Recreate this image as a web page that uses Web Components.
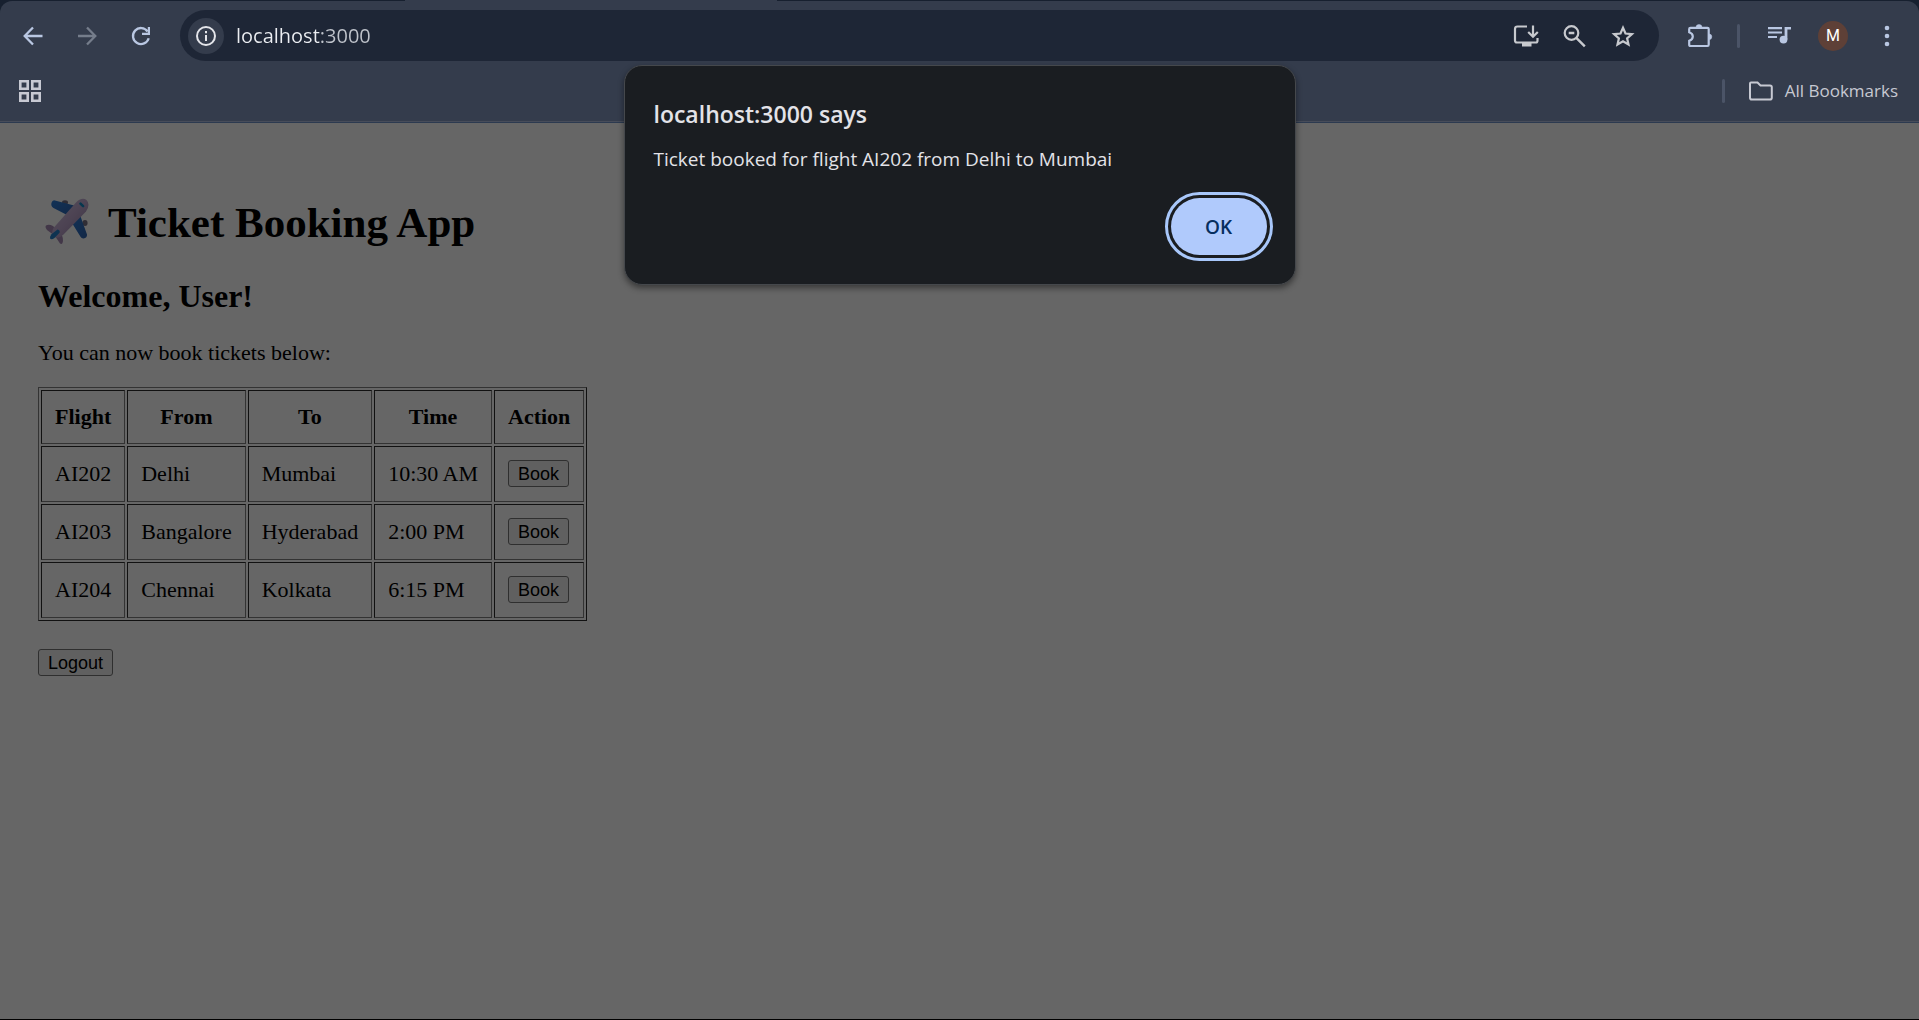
<!DOCTYPE html>
<html lang="en">
<head>
<meta charset="utf-8">
<title>Ticket Booking App</title>
<style>
  html, body { height: 100%; margin: 0; }
  body { background: #000; overflow: hidden; }
</style>
</head>
<body>
<browser-window>
  <browser-toolbar slot="toolbar"></browser-toolbar>
  <bookmarks-bar slot="bookmarks"></bookmarks-bar>
  <booking-page slot="page"></booking-page>
  <alert-dialog slot="dialog" heading="localhost:3000 says">Ticket booked for flight AI202 from Delhi to Mumbai</alert-dialog>
</browser-window>

<script>
const define = (name, html, setup) => {
  const template = document.createElement('template');
  template.innerHTML = html;
  customElements.define(name, class extends HTMLElement {
    constructor() {
      super();
      this.attachShadow({ mode: 'open' }).append(template.content.cloneNode(true));
    }
    connectedCallback() { if (setup) setup(this, this.shadowRoot); }
  });
};

const icons = {
  back: '<path d="M23.500 14H6M14 5.500 5.700 14l8.300 8.500" fill="none" stroke="currentColor" stroke-width="2.300"/>',
  forward: '<path d="M5 14h17.500M14 5.500l8.300 8.500-8.300 8.500" fill="none" stroke="currentColor" stroke-width="2.300"/>',
  reload: '<path d="M21.700 16.200A8 8 0 1 1 20.600 9.500" fill="none" stroke="currentColor" stroke-width="2.300"/><path d="M23 5v8h-8v-2.200h5.800V5z" fill="currentColor"/>',
  info: '<circle cx="14" cy="14" r="9" fill="none" stroke="currentColor" stroke-width="2"/><path d="M14 13v6M14 9v2.200" stroke="currentColor" stroke-width="2"/>',
  install: '<path d="M14 4.500H4.500Q2 4.500 2 7v11.500q0 2 2 2h19q1.500 0 1.500-2v-2.500" fill="none" stroke="currentColor" stroke-width="2.200"/><path d="M9 20.500h9.500v4H9z" fill="currentColor"/><path d="M20 3.500v10.500M15.200 10l4.800 4.800 4.800-4.800" fill="none" stroke="currentColor" stroke-width="2.200"/>',
  zoom: '<circle cx="10.500" cy="11" r="6.800" fill="none" stroke="currentColor" stroke-width="2.200"/><path d="M7.700 11h5.600M15.300 15.900l8.500 8.500" stroke="currentColor" stroke-width="2.400"/>',
  star: '<path d="M14 5.700l2.500 5.800 6.400.6-4.800 4.200 1.400 6.200L14 19.200l-5.500 3.300 1.400-6.200-4.800-4.200 6.400-.6z" fill="none" stroke="currentColor" stroke-width="2.200" stroke-linejoin="miter"/>',
  puzzle: '<g transform="translate(1.500 0)"><path d="M5 5.800h17q1.200 0 1.200 1.300v15.400q0 1.500-1.200 1.500H5q-1.300 0-1.300-1.500v-3.700c4.800-1.600 4.800-7 0-8.600V7.100Q3.700 5.800 5 5.800z" fill="none" stroke="currentColor" stroke-width="2.200"/><path d="M10.500 5.500a3 3 0 0 1 6 0zM23.500 12a2.800 2.800 0 0 1 0 5.600z" fill="currentColor" stroke="currentColor" stroke-width=".5"/></g>',
  media: '<g transform="translate(1 0)"><path d="M2 6.200h14M2 10.500h14M2 15h9" stroke="currentColor" stroke-width="2.200"/><circle cx="17.500" cy="17.600" r="3.900" fill="currentColor"/><path d="M18.600 17.500V5h6.400v2.500h-3.600v10z" fill="currentColor"/></g>',
  dots: '<circle cx="14" cy="6" r="2.300" fill="currentColor"/><circle cx="14" cy="14" r="2.300" fill="currentColor"/><circle cx="14" cy="22" r="2.300" fill="currentColor"/>',
  grid: '<path d="M4.300 4.300h7.400v7.400H4.300zM16.300 4.300h7.400v7.400h-7.400zM4.300 16.300h7.400v7.400H4.300zM16.300 16.300h7.400v7.400h-7.400z" fill="none" stroke="currentColor" stroke-width="2.600"/>',
  folder: '<path d="M4 5.500h6.500l3 3H23q1.800 0 1.800 1.800v10.400q0 1.800-1.800 1.800H4.800Q3 22.500 3 20.700V6.500q0-1 1-1z" fill="none" stroke="currentColor" stroke-width="2"/>'
};

/* <ui-icon name="…">: one glyph from the icon set */
define('ui-icon', `
  <style>
    :host { display: block; width: 28px; height: 28px; flex: none; }
    svg { display: block; width: 100%; height: 100%; overflow: visible; }
  </style>
  <svg viewBox="0 0 28 28" aria-hidden="true"></svg>`,
  (host, root) => { root.querySelector('svg').innerHTML = icons[host.getAttribute('name')] || ''; });

define('bar-divider', `
  <style>:host { display: block; width: 3px; height: 24px; border-radius: 2px; background: #4b5467; flex: none; }</style>`);

define('browser-window', `
  <style>
    :host { display: flex; flex-direction: column; height: 100vh; box-sizing: border-box;
            border-bottom: 1px solid #000; position: relative; background: #17202f;
            font-family: "Open Sans", "Noto Sans", sans-serif; }
    .tabs { height: 1px; display: flex; padding-left: 405px; flex: none; }
    .tab { width: 372px; background: #343c4c; }
    header { background: #343c4c; border-radius: 12px 12px 0 0; border-bottom: 1px solid #2c3a50; flex: none; }
    .inner { border-bottom: 1px solid #474c59; }
    main { flex: 1; min-height: 0; position: relative; background: #fff; }
    .backdrop { position: absolute; inset: 0; background: rgba(0, 0, 0, .6); }
    .modal { position: absolute; top: 65px; left: 0; right: 0; display: flex; justify-content: center; }
  </style>
  <div class="tabs"><div class="tab"></div></div>
  <header><div class="inner">
    <slot name="toolbar"></slot>
    <slot name="bookmarks"></slot>
  </div></header>
  <main><slot name="page"></slot><div class="backdrop"></div></main>
  <div class="modal"><slot name="dialog"></slot></div>`);

define('browser-toolbar', `
  <style>
    :host { display: flex; align-items: center; padding: 9px 18px 0 19px; color: #b9c7e2; }
    button { display: block; padding: 0; border: 0; background: none; color: inherit; font: inherit; flex: none; }
    nav { display: flex; gap: 26px; margin-right: 25px; }
    button:disabled { color: #757d8b; }
    .address { flex: 1; display: flex; align-items: center; height: 51px; box-sizing: border-box;
               padding: 0 22px 0 8px; border-radius: 26px; background: #1e2636; color: #c7c9ce; }
    .site { width: 36px; height: 36px; border-radius: 50%; background: #343c4c; color: #e4e5ea;
            display: grid; place-items: center; margin-right: 12px; }
    input { flex: 1; min-width: 0; border: 0; padding: 0; outline: 0; height: 32px; color: #e8eaed;
            font: 20px "Open Sans", "Noto Sans", sans-serif;
            background: linear-gradient(90deg, #eceef2 84px, #bfc3cb 84px);
            -webkit-background-clip: text; background-clip: text; -webkit-text-fill-color: transparent; }
    .actions { display: flex; gap: 20px; }
    .tools { display: flex; align-items: center; gap: 25px; margin-left: 25px; }
    .avatar { width: 30px; height: 30px; border-radius: 50%; background: #5e4037; color: #fff;
              font: 400 16px/30px Roboto, sans-serif; text-align: center; }
  </style>
  <nav>
    <button aria-label="Back"><ui-icon name="back"></ui-icon></button>
    <button aria-label="Forward" disabled><ui-icon name="forward"></ui-icon></button>
    <button aria-label="Reload"><ui-icon name="reload"></ui-icon></button>
  </nav>
  <div class="address">
    <button class="site" aria-label="Site information"><ui-icon name="info"></ui-icon></button>
    <input type="text" aria-label="Address" value="localhost:3000" spellcheck="false">
    <div class="actions">
      <button aria-label="Install"><ui-icon name="install"></ui-icon></button>
      <button aria-label="Zoom"><ui-icon name="zoom"></ui-icon></button>
      <button aria-label="Bookmark"><ui-icon name="star"></ui-icon></button>
    </div>
  </div>
  <div class="tools">
    <button aria-label="Extensions"><ui-icon name="puzzle"></ui-icon></button>
    <bar-divider></bar-divider>
    <button aria-label="Media"><ui-icon name="media"></ui-icon></button>
    <button class="avatar" aria-label="Profile">M</button>
    <button aria-label="Menu"><ui-icon name="dots"></ui-icon></button>
  </div>`);

define('bookmarks-bar', `
  <style>
    :host { display: flex; align-items: center; justify-content: space-between; height: 60px;
            padding: 0 21px 0 16px; color: #c7c9d2; }
    button { display: flex; align-items: center; gap: 10px; padding: 0; border: 0; background: none;
             color: inherit; font: 17px/24px "Open Sans", "Noto Sans", sans-serif; }
    .all { display: flex; align-items: center; gap: 22px; }
  </style>
  <button aria-label="Apps"><ui-icon name="grid"></ui-icon></button>
  <div class="all">
    <bar-divider></bar-divider>
    <button><ui-icon name="folder"></ui-icon>All Bookmarks</button>
  </div>`);

define('plain-button', `
  <style>
    :host { display: block; width: max-content; }
    button { display: block; box-sizing: border-box; height: 27px; padding: 0 9px; color: #000;
             background: #efefef; border: 1px solid #767676; border-radius: 3px;
             font: 18px/24px "Liberation Sans", Arial, sans-serif; }
  </style>
  <button><slot></slot></button>`);

const flights = [
  ['AI202', 'Delhi', 'Mumbai', '10:30 AM'],
  ['AI203', 'Bangalore', 'Hyderabad', '2:00 PM'],
  ['AI204', 'Chennai', 'Kolkata', '6:15 PM']
];

define('flight-table', `
  <style>
    :host { display: block; }
    table { color: #000; font-size: 22px; line-height: 24px; border-spacing: 2px; }
    th { padding: 14px 13px; }
    td { padding: 13px 13px 14px; }
  </style>
  <table border="1">
    <thead><tr><th>Flight</th><th>From</th><th>To</th><th>Time</th><th>Action</th></tr></thead>
    <tbody></tbody>
  </table>`,
  (host, root) => {
    root.querySelector('tbody').innerHTML = flights.map(row =>
      `<tr>${row.map(v => `<td>${v}</td>`).join('')}<td><plain-button>Book</plain-button></td></tr>`).join('');
  });

define('booking-page', `
  <style>
    :host { display: block; padding: 74px 38px 0; color: #000;
            font-family: "Liberation Serif", "Times New Roman", serif; }
    h1, h2, p { margin: 0; }
    h1 { display: flex; align-items: center; gap: 12px; font-size: 43px; line-height: 52px; }
    h1 svg { width: 58px; height: 52px; flex: none; }
    h2 { font-size: 32px; line-height: 38px; margin-top: 28px; }
    p { font-size: 22px; line-height: 26px; margin: 25px 0 21px; }
    plain-button { margin-top: 28px; }
  </style>
  <h1>
    <svg viewBox="0 0 58 52" role="img" aria-label="airplane">
      <defs>
        <linearGradient id="hull" x1="0" y1="0" x2="1" y2="1">
          <stop offset="0" stop-color="#d9c8ea"/><stop offset=".5" stop-color="#c0a8cf"/><stop offset="1" stop-color="#947da6"/>
        </linearGradient>
        <linearGradient id="wing" x1="0" y1="0" x2="1" y2="1">
          <stop offset="0" stop-color="#2c7cd8"/><stop offset="1" stop-color="#2e62ad"/>
        </linearGradient>
      </defs>
      <ellipse cx="27" cy="5.500" rx="3" ry="2.300" fill="#777084"/>
      <ellipse cx="47" cy="26" rx="2.600" ry="3" fill="#777084"/>
      <path d="M16 3.200 38 9 31 19 15.500 11Q12.500 9 13.500 5.800 14.300 3.200 16 3.200z" fill="url(#wing)"/>
      <path d="M42 18l7 19.500q.3 3.500-3.500 4-2 .1-3-1.700L34 26z" fill="url(#wing)"/>
      <path d="M8 28.500q3-1.500 7 .5l8 8q3 4 1.500 9-.8 1.800-2.500.6L17 39l-8-6q-2.300-3-1-4.500z" fill="#a58ab5"/>
      <path d="M15.500 31 37.500 6q6-6.200 11-3.100 4.300 4.500-.5 11.500L25.500 37.500q-5 5-9 2.500-4-3.500-1-9z" fill="url(#hull)"/>
      <path d="M19.500 32.500q3 1 2 3.200L16.500 41q-3.500 2.500-4.500.2-.2-2.200 1.500-4z" fill="#257fcb"/>
      <path d="M42.500 6.600l2.600 2.600" stroke="#128ac2" stroke-width="2.600" stroke-linecap="round"/>
    </svg>Ticket Booking App</h1>
  <h2>Welcome, User!</h2>
  <p>You can now book tickets below:</p>
  <flight-table></flight-table>
  <plain-button>Logout</plain-button>`);

define('alert-dialog', `
  <style>
    :host { display: flex; flex-direction: column; box-sizing: border-box; width: 672px; max-width: 90vw;
            padding: 32px 28px 29px 29px; border: 1px solid #45484c; border-radius: 18px; background: #1a1d21;
            box-shadow: 0 3px 6px rgba(0, 0, 0, .45); color: #e3e3e8; }
    h2 { margin: 0; font-size: 23px; line-height: 32px; font-weight: 600; }
    p { margin: 15px 0 25px; font-size: 19px; line-height: 28px; }
    button { align-self: flex-end; width: 96px; height: 57px; border: 0; border-radius: 29px;
             background: #b0cafc; color: #062e5f; outline: 3px solid #a8c7fa; outline-offset: 3px;
             font: 600 19px/24px "Open Sans", "Noto Sans", sans-serif; }
  </style>
  <h2></h2>
  <p><slot></slot></p>
  <button>OK</button>`,
  (host, root) => { root.querySelector('h2').textContent = host.getAttribute('heading'); });
</script>
</body>
</html>
